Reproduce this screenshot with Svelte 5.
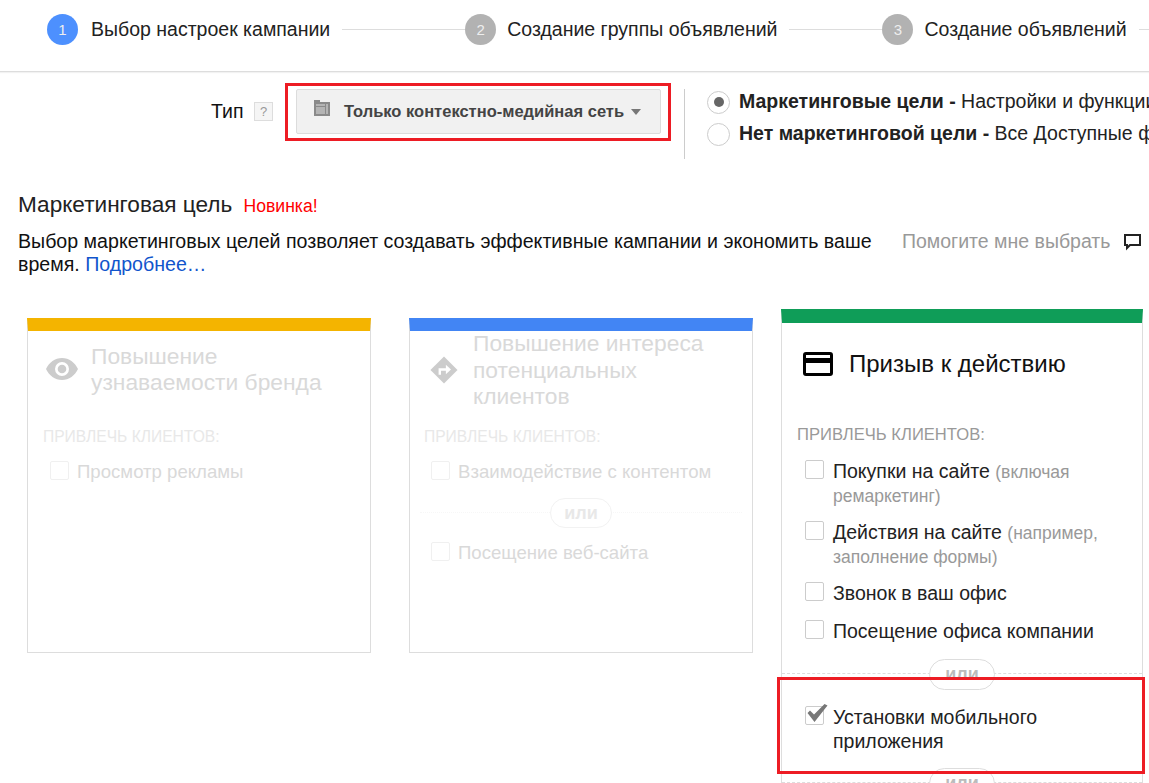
<script>
  const steps = [
    { n: 1, label: 'Выбор настроек кампании', active: true },
    { n: 2, label: 'Создание группы объявлений' },
    { n: 3, label: 'Создание объявлений' }
  ];
</script>

<div class="page">
  <header class="steps">
    {#each steps as s}
      <span class="num" class:active={s.active}>{s.n}</span>
      <span class="step-label">{s.label}</span>
      <span class="line"></span>
    {/each}
  </header>

  <section class="type-row">
    <div class="type-label">Тип</div>
    <span class="help">?</span>
    <button class="select">
      <svg class="sel-icon" width="16" height="16" viewBox="0 0 16 16">
        <path fill="#8a8a8a" d="M0 0h6v2h10v14H0z" />
        <path fill="#b4b4b4" d="M2 4h9v2H2zM12 4h2v10h-2zM2 7h9v7H2z" />
      </svg>
      <span>Только контекстно-медийная сеть</span>
      <i class="caret"></i>
    </button>
    <div class="divider"></div>
    <div class="radios">
      <div class="radio-row"><span class="radio on"></span><span class="radio-text"><b>Маркетинговые цели -</b> Настройки и функции</span></div>
      <div class="radio-row"><span class="radio"></span><span class="radio-text"><b>Нет маркетинговой цели -</b> Все Доступные функции</span></div>
    </div>
  </section>

  <section class="intro">
    <h2>Маркетинговая цель <em>Новинка!</em></h2>
    <div class="intro-row">
      <p>Выбор маркетинговых целей позволяет создавать эффективные кампании и экономить ваше время. <a href="#x">Подробнее…</a></p>
      <span class="helpme">Помогите мне выбрать</span>
      <svg class="bubble" width="20" height="18" viewBox="0 0 20 18">
        <path fill="none" stroke="#222" stroke-width="2" d="M2 2h15v10H7l-3 3v-3H2z" />
      </svg>
    </div>
  </section>

  <section class="cards">
    <article class="card dim yellow">
      <div class="card-head head1">
        <svg class="ic" width="32" height="22" viewBox="0 0 32 22">
          <path fill="#ccc" fill-rule="evenodd" d="M16 0C9 0 3 4.500 0 11c3 6.500 9 11 16 11s13-4.500 16-11C29 4.500 23 0 16 0zm0 18a7 7 0 1 1 0-14 7 7 0 0 1 0 14z" />
          <circle cx="16" cy="11" r="4.300" fill="#ccc" />
        </svg>
        <h3>Повышение узнаваемости бренда</h3>
      </div>
      <div class="attract a1">ПРИВЛЕЧЬ КЛИЕНТОВ:</div>
      <label class="opt"><span class="box"></span><span>Просмотр рекламы</span></label>
    </article>

    <article class="card dim blue">
      <div class="card-head head2">
        <svg class="ic" width="28" height="28" viewBox="0 0 30 30">
          <path fill="#ccc" d="M15 0.500 29.500 15 15 29.500 0.500 15z" />
          <path fill="none" stroke="#fff" stroke-width="2.600" d="M10.500 20v-5.500h8" />
          <path fill="#fff" d="M17 9.500 22.500 14.500 17 19.500z" />
        </svg>
        <h3>Повышение интереса потенциальных клиентов</h3>
      </div>
      <div class="attract a2">ПРИВЛЕЧЬ КЛИЕНТОВ:</div>
      <label class="opt"><span class="box"></span><span>Взаимодействие с контентом</span></label>
      <div class="or or2"><span>или</span></div>
      <label class="opt after-or"><span class="box"></span><span>Посещение веб-сайта</span></label>
    </article>

    <article class="card main">
      <div class="card-head head3">
        <svg class="ic" width="30" height="24" viewBox="0 0 30 24">
          <path fill="#000" fill-rule="evenodd" d="M3 0h24a3 3 0 0 1 3 3v18a3 3 0 0 1-3 3H3a3 3 0 0 1-3-3V3a3 3 0 0 1 3-3zm0 3v3h24V3zm0 8v10h24V11z" />
        </svg>
        <h3>Призыв к действию</h3>
      </div>
      <div class="attract a3">ПРИВЛЕЧЬ КЛИЕНТОВ:</div>
      <label class="opt o1"><span class="box"></span><span>Покупки на сайте <small>(включая ремаркетинг)</small></span></label>
      <label class="opt o2"><span class="box"></span><span>Действия на сайте <small>(например, заполнение формы)</small></span></label>
      <label class="opt o3"><span class="box"></span><span>Звонок в ваш офис</span></label>
      <label class="opt o4"><span class="box"></span><span>Посещение офиса компании</span></label>
      <div class="or or3"><span>или</span></div>
      <label class="opt app"><span class="box checked">
        <svg width="23" height="22" viewBox="0 0 23 22"><path fill="#777" d="M2.500 10 5 7.500l4 4L19.500 1 22.500 2.500 9.500 19z" /></svg>
      </span><span>Установки мобильного приложения</span></label>
      <div class="or or4"><span>или</span></div>
    </article>
  </section>

  <div class="mark mark1"></div>
  <div class="mark mark2"></div>
</div>

<style>
  :global(body) { margin: 0; background: #fff; }
  .page {
    position: relative; width: 1149px; height: 783px; overflow: hidden;
    font-family: "Liberation Sans", Arial, sans-serif; color: #222; font-size: 19.500px;
  }
  .steps {
    display: flex; align-items: center; height: 72px; box-sizing: border-box;
    padding: 0 0 13px 47px; border-bottom: 1px solid #ddd; white-space: nowrap;
    box-shadow: 0 1px 1px #f2f2f2;
  }
  .num {
    flex: none; width: 31px; height: 31px; border-radius: 50%; background: #b2b2b2; color: #eee;
    font-size: 15px; line-height: 31px; text-align: center; margin-right: 11px;
  }
  .num.active { background: #4d90fe; margin-right: 13px; }
  .step-label { flex: none; }
  .line { flex: none; width: 123px; height: 1px; background: #ddd; margin-left: 12px; }
  .line:nth-child(6) { width: 93px; }
  .line:last-child { width: 100px; }

  .type-row { display: flex; align-items: flex-start; height: 115px; padding: 17px 0 0 211px; box-sizing: border-box; }
  .type-label { flex: none; width: 43px; line-height: 45px; color: #111; }
  .help {
    flex: none; width: 19px; height: 19px; margin-top: 13px; border: 1px solid #ddd; background: #f5f5f5; box-sizing: border-box;
    color: #999; font-size: 13px; line-height: 17px; text-align: center;
  }
  .select {
    flex: none; display: flex; align-items: center; width: 365px; height: 45px; margin: 0 0 0 23px; padding: 0 0 0 17px;
    background: #f1f1f1; border: 1px solid #dcdcdc; border-radius: 2px; box-sizing: border-box;
    font: bold 16.500px "Liberation Sans", Arial, sans-serif; color: #444; white-space: nowrap;
  }
  .sel-icon { margin: -7px 14px 0 0; flex: none; }
  .caret { width: 0; height: 0; margin-left: 7px; border: 5.500px solid transparent; border-top: 6px solid #777; border-bottom: 0; }
  .divider { flex: none; width: 1px; height: 70px; background: #ccc; margin-left: 23px; }
  .radios { flex: none; margin-left: 22px; margin-top: -3px; white-space: nowrap; }
  .radio-row { display: flex; align-items: center; height: 32px; gap: 9px; }
  .radio-text { margin-top: -2px; }
  .radio {
    flex: none; position: relative; width: 21px; height: 21px; border: 1px solid #ccc; border-radius: 50%; background: #fff;
  }
  .radio.on::after {
    content: ""; position: absolute; left: 5.500px; top: 5.500px; width: 10px; height: 10px; border-radius: 50%; background: #666;
  }

  .intro { padding: 0 0 0 18px; }
  h2 { margin: 0; font-weight: normal; font-size: 22.600px; line-height: 36px; color: #222; }
  h2 em { font-style: normal; font-size: 17.600px; color: #f00; margin-left: 5px; }
  .intro-row { display: flex; position: relative; margin-top: 6px; }
  .intro-row p { margin: 0; width: 870px; font-size: 19.600px; line-height: 23px; flex: none; color: #111; }
  .intro-row a { color: #15c; text-decoration: none; }
  .helpme { flex: none; margin-left: 14px; color: #999; line-height: 23px; white-space: nowrap; }
  .bubble { flex: none; margin: 3px 0 0 13px; }

  .cards { position: absolute; left: 27px; top: 309px; display: flex; align-items: flex-start; gap: 38px; }
  .card {
    position: relative; box-sizing: border-box; width: 344px; height: 335px; margin-top: 9px;
    border: 1px solid #ddd; border-top: 13px solid; background: #fff;
  }
  .card.main { width: 362px; height: 600px; margin-top: 0; margin-left: -10px; border-top: 14px solid #0f9d58; }
  .yellow { border-top-color: #f4b400; }
  .blue { border-top-color: #4285f4; }
  .card-head { display: flex; align-items: center; }
  .head1 { padding: 10px 0 0 18px; height: 56px; }
  .head2 { padding: 0 0 0 20px; height: 78px; }
  .head3 { padding: 27px 0 0 21px; height: 28px; }
  .ic { flex: none; margin-right: 13px; }
  .head2 .ic { margin-right: 15px; }
  .head3 .ic { margin-right: 16px; }
  h3 { margin: 0; font-weight: normal; font-size: 24px; line-height: 26.500px; color: #111; width: 270px; }
  .head1 h3, .head2 h3 { width: 245px; }
  .dim h3 { color: #d9d9d9; font-size: 22.800px; }
  .attract { padding-left: 15px; font-size: 16.600px; line-height: 18px; color: #999; white-space: nowrap; }
  .a1 { padding-top: 31px; }
  .a2 { padding-top: 19px; padding-left: 14px; }
  .a3 { padding-top: 48px; }
  .dim .attract { color: #e8e8e8; font-size: 15.600px; }
  .opt { display: flex; align-items: flex-start; gap: 9px; padding: 14px 0 0 23px; line-height: 24px; color: #222; }
  .dim .opt { color: #d9d9d9; gap: 8px; padding-left: 22px; font-size: 18.600px; }
  .blue .opt { padding-left: 21px !important; }
  .o1 { padding-top: 15px; }
  .o2 { padding-top: 13px; }
  .o3 { padding-top: 13px; }
  .o4 { padding-top: 14px; }
  .box {
    flex: none; position: relative; width: 17px; height: 17px; margin-top: 1px; border: 1px solid #ccc; border-radius: 2px; background: #fff;
  }
  .dim .box { border-color: #f0f0f0; }
  .checked svg { position: absolute; left: -1px; top: -4px; }
  small { font-size: 17.500px; color: #999; line-height: 1; }
  .or { position: relative; text-align: center; border-top: 1px dashed #ddd; }
  .or span {
    position: absolute; left: 50%; top: -15px; transform: translateX(-50%); width: 66px; height: 31px; box-sizing: border-box;
    border: 1px solid #ddd; border-radius: 16px; background: #fff; color: #bbb; font-weight: bold; font-size: 18px; line-height: 29px;
  }
  .dim .or { border-top: 1px dotted #f7f7f7; margin: 28px 10px 0; }
  .dim .or span { width: 62px; height: 30px; border-color: #f2f2f2; color: #e8e8e8; }
  .after-or { padding-top: 28px !important; }
  .or3 { margin-top: 30px; }
  .app { padding-top: 31px; }
  .or4 { margin-top: 29px; }
  .mark { position: absolute; box-sizing: border-box; border: 3px solid #ed1c24; pointer-events: none; }
  .mark1 { left: 285px; top: 83px; width: 386px; height: 58px; }
  .mark2 { left: 777px; top: 677px; width: 368px; height: 97px; }
</style>
